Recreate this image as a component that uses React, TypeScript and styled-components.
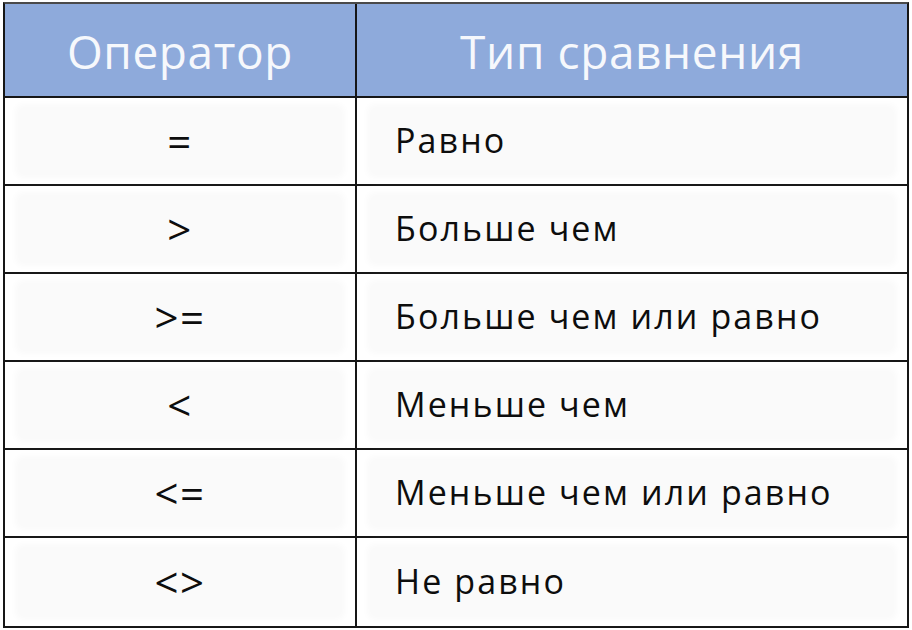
import styled, { createGlobalStyle } from 'styled-components'

const GlobalStyle = createGlobalStyle`
  html, body {
    margin: 0;
    padding: 0;
    background: #ffffff;
  }
  body {
    font-family: 'Open Sans', 'Noto Sans', sans-serif;
  }
`

const Page = styled.div`
  width: 912px;
  height: 630px;
  padding: 2px 3px 0 3px;
  box-sizing: border-box;
  background: #ffffff;
`

const Table = styled.div`
  display: grid;
  grid-template-columns: 352px 1fr;
  grid-template-rows: 94px repeat(6, 88px);
  width: 906px;
  border: 2px solid #161616;
  border-top-color: #4a4a4a;
  box-sizing: border-box;
`

const HeadCell = styled.div<{ $last?: boolean }>`
  display: flex;
  align-items: center;
  justify-content: center;
  background: #8eaadb;
  color: #f6f8fc;
  font-size: 46px;
  letter-spacing: 0.6px;
  border-right: ${(p) => (p.$last ? 'none' : '2px solid #161616')};
  border-bottom: 2px solid #161616;
  padding-top: 2px;
  box-sizing: border-box;
`

const Cell = styled.div<{ $op?: boolean; $bottom?: boolean }>`
  display: flex;
  align-items: center;
  padding: 10px 14px;
  border-right: ${(p) => (p.$op ? '2px solid #161616' : 'none')};
  border-bottom: ${(p) => (p.$bottom ? 'none' : '2px solid #161616')};
  box-sizing: border-box;
`

const Inner = styled.div<{ $op?: boolean }>`
  flex: 1;
  height: 100%;
  display: flex;
  align-items: center;
  justify-content: ${(p) => (p.$op ? 'center' : 'flex-start')};
  padding-left: ${(p) => (p.$op ? '0' : '24px')};
  background: #fafafa;
  box-shadow: 0 0 6px 4px #fafafa;
  border-radius: 4px;
  color: #0d0d0d;
  font-size: ${(p) => (p.$op ? '42px' : '34px')};
  font-weight: 500;
  letter-spacing: ${(p) => (p.$op ? '1.5px' : '2.1px')};
  padding-bottom: 2px;
  box-sizing: border-box;
  white-space: pre;
`

const rows = [
  ['=', 'Равно'],
  ['>', 'Больше чем'],
  ['>=', 'Больше чем или равно'],
  ['<', 'Меньше чем'],
  ['<=', 'Меньше чем или равно'],
  ['<>', 'Не равно'],
]

export default function App() {
  return (
    <Page>
      <GlobalStyle />
      <Table>
        <HeadCell>Оператор</HeadCell>
        <HeadCell $last>Тип сравнения</HeadCell>
        {rows.map(([op, label], i) => {
          const bottom = i === rows.length - 1
          return [
            <Cell key={`o${i}`} $op $bottom={bottom}>
              <Inner $op>{op}</Inner>
            </Cell>,
            <Cell key={`l${i}`} $bottom={bottom}>
              <Inner>{label}</Inner>
            </Cell>,
          ]
        })}
      </Table>
    </Page>
  )
}
